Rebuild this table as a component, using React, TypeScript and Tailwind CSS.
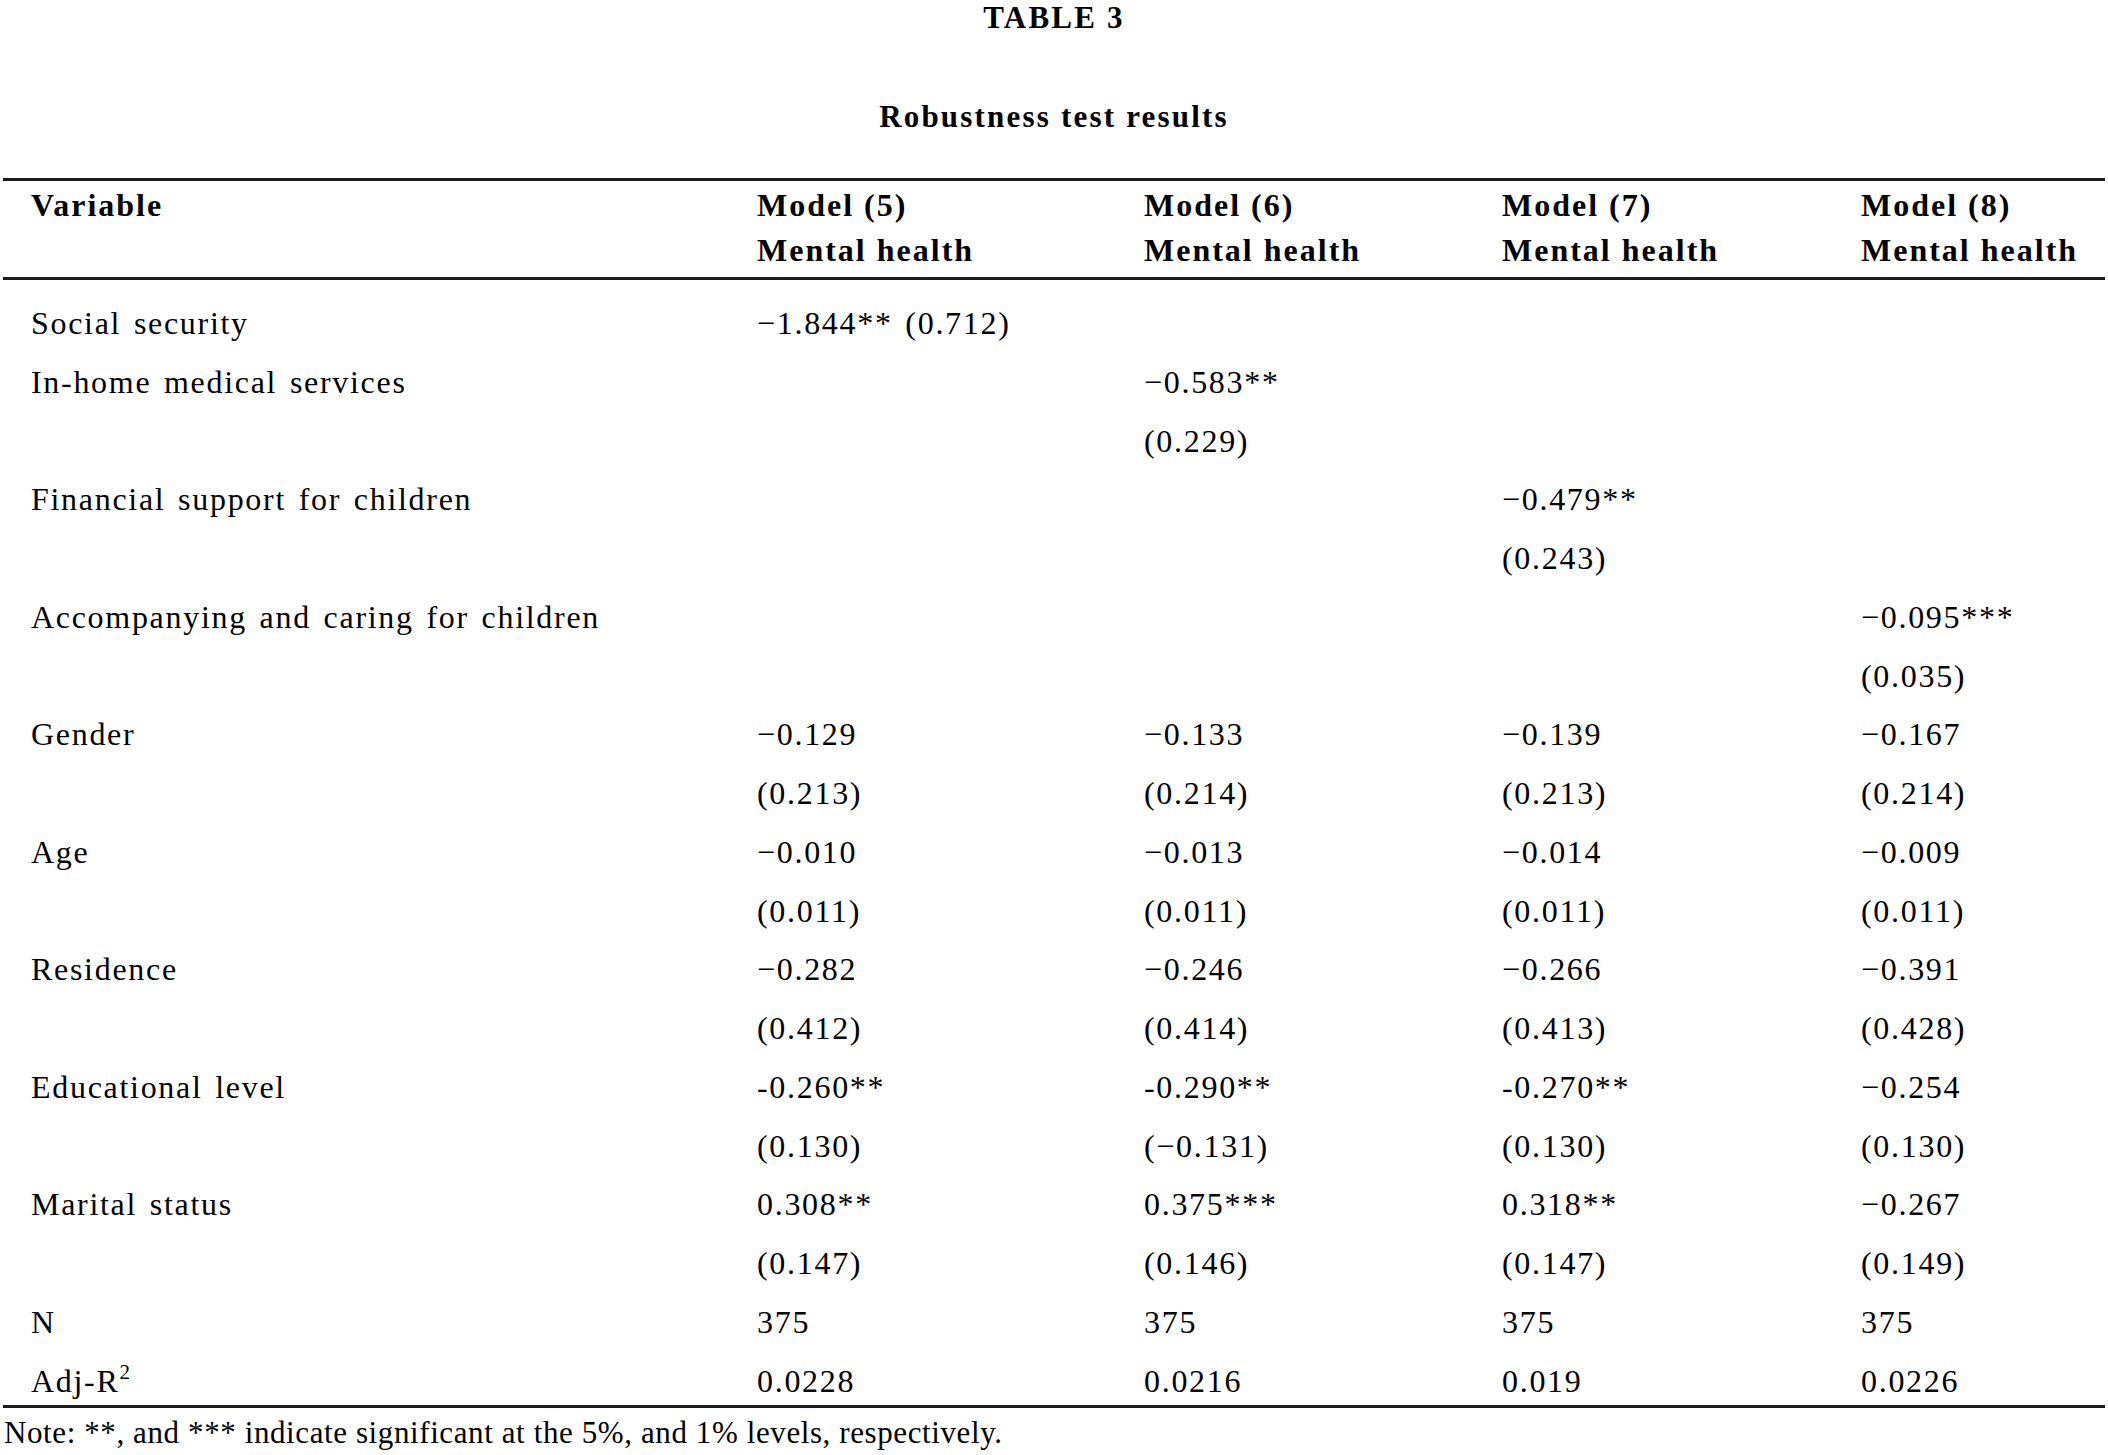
const FONT = "font-['Liberation_Serif','Times_New_Roman',serif]";

type Row = { label: React.ReactNode; cells: string[] };

const rows: Row[] = [
  { label: 'Social security', cells: ['−1.844** (0.712)', '', '', ''] },
  { label: 'In-home medical services', cells: ['', '−0.583**', '', ''] },
  { label: '', cells: ['', '(0.229)', '', ''] },
  { label: 'Financial support for children', cells: ['', '', '−0.479**', ''] },
  { label: '', cells: ['', '', '(0.243)', ''] },
  { label: 'Accompanying and caring for children', cells: ['', '', '', '−0.095***'] },
  { label: '', cells: ['', '', '', '(0.035)'] },
  { label: 'Gender', cells: ['−0.129', '−0.133', '−0.139', '−0.167'] },
  { label: '', cells: ['(0.213)', '(0.214)', '(0.213)', '(0.214)'] },
  { label: 'Age', cells: ['−0.010', '−0.013', '−0.014', '−0.009'] },
  { label: '', cells: ['(0.011)', '(0.011)', '(0.011)', '(0.011)'] },
  { label: 'Residence', cells: ['−0.282', '−0.246', '−0.266', '−0.391'] },
  { label: '', cells: ['(0.412)', '(0.414)', '(0.413)', '(0.428)'] },
  { label: 'Educational level', cells: ['-0.260**', '-0.290**', '-0.270**', '−0.254'] },
  { label: '', cells: ['(0.130)', '(−0.131)', '(0.130)', '(0.130)'] },
  { label: 'Marital status', cells: ['0.308**', '0.375***', '0.318**', '−0.267'] },
  { label: '', cells: ['(0.147)', '(0.146)', '(0.147)', '(0.149)'] },
  { label: 'N', cells: ['375', '375', '375', '375'] },
  {
    label: (
      <>
        Adj-R<sup className="-top-[13px] text-[21px]">2</sup>
      </>
    ),
    cells: ['0.0228', '0.0216', '0.019', '0.0226'],
  },
];

const models = ['Model (5)', 'Model (6)', 'Model (7)', 'Model (8)'];

const GRID = 'grid grid-cols-[726px_387px_358px_359px_1fr]';

export default function App() {
  return (
    <div className={`min-h-screen bg-white text-black ${FONT}`}>
      {/* Caption */}
      <div className="text-center font-bold text-[31px] tracking-[2.2px]">
        <div className="leading-[36px]">TABLE 3</div>
        <div className="mt-[63px] leading-[36px]">Robustness test results</div>
      </div>

      {/* Table */}
      <div className="mt-[43px] px-[3px]">
        <div className="h-[3px] bg-[#1c1c1c]" />
        <div className={`${GRID} pt-[2px] pb-[4px] text-[32px] font-bold leading-[45px] tracking-[2px]`}>
          <div className="pl-[28px]">Variable</div>
          {models.map((m) => (
            <div key={m} className="pl-[28px]">
              <div>{m}</div>
              <div>Mental health</div>
            </div>
          ))}
        </div>
        <div className="h-[3px] bg-[#1c1c1c]" />

        <div className={`${GRID} gap-y-[10.78px] pt-[19px] text-[32px] leading-[48px] tracking-[1.7px] [word-spacing:3px]`}>
          {rows.map((r, i) => (
            <div key={i} className="contents">
              <div className="pl-[28px] whitespace-nowrap">{r.label}</div>
              {r.cells.map((c, j) => (
                <div key={j} className="pl-[28px] whitespace-nowrap">
                  {c}
                </div>
              ))}
            </div>
          ))}
        </div>
        <div className="h-[3px] bg-[#1c1c1c]" />
      </div>

      {/* Footnote */}
      <div className="pl-[4px] text-[31px] leading-[50px] tracking-[0.6px]">
        Note: **, and *** indicate significant at the 5%, and 1% levels, respectively.
      </div>
    </div>
  );
}
